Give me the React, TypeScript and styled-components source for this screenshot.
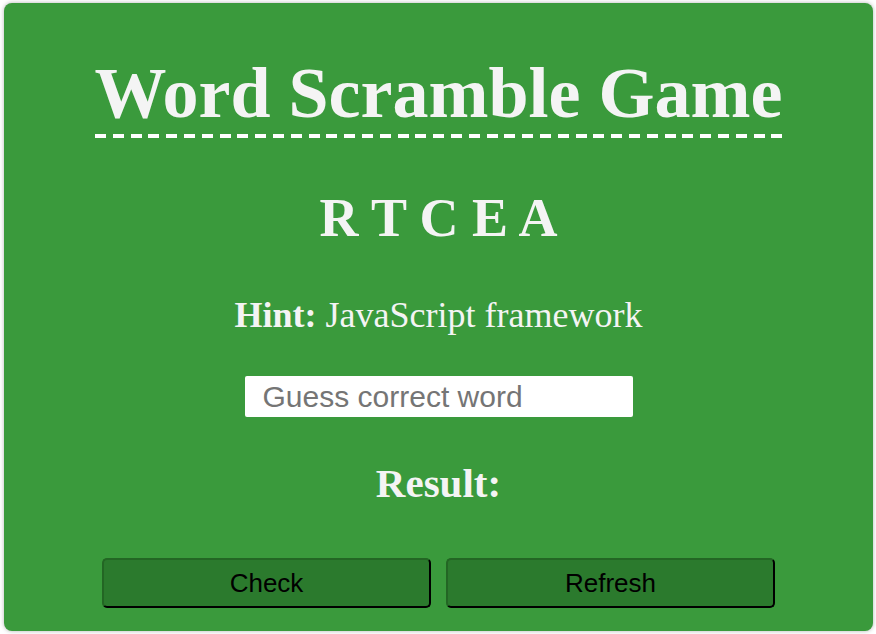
import React, { useState } from "react";
import styled, { createGlobalStyle } from "styled-components";

const GlobalStyle = createGlobalStyle`
  html, body { margin: 0; padding: 0; background: #ffffff; }
  body { font-family: "Liberation Serif", "Times New Roman", serif; }
  * { box-sizing: border-box; }
`;

const Page = styled.div`
  padding: 3px 3px 3px 4px;
  height: 634px;
`;

const Card = styled.div`
  width: 869px;
  height: 628px;
  background: #3a9a3c;
  border-radius: 8px;
  box-shadow: 0 0 4px rgba(0, 0, 0, 0.3);
  padding-top: 54px;
  display: flex;
  flex-direction: column;
  align-items: center;
  color: #f4f4f4;
`;

const Title = styled.h1`
  position: relative;
  margin: 0;
  font-family: "Liberation Serif", "Times New Roman", serif;
  font-weight: bold;
  font-size: 72px;
  line-height: 1;
  padding-bottom: 9px;

  &::after {
    content: "";
    position: absolute;
    left: 0;
    right: 0;
    bottom: 0;
    height: 4px;
    background: repeating-linear-gradient(
      90deg,
      #ffffff 0 11px,
      transparent 11px 17.8px
    );
  }
`;

const Scrambled = styled.div`
  margin-top: 53px;
  font-weight: bold;
  font-size: 54px;
  line-height: 1;
  white-space: pre;
`;

const Hint = styled.p`
  margin: 52px 0 0;
  font-size: 36px;
  line-height: 1;
`;

const Strong = styled.b`
  font-weight: bold;
`;

const Input = styled.input`
  margin-top: 43px;
  width: 388px;
  height: 41px;
  border: none;
  border-radius: 2px;
  background: #ffffff;
  padding: 0 0 0 18px;
  font-family: "Liberation Sans", Arial, sans-serif;
  font-size: 30px;
  color: #222;
  outline: none;
  &::placeholder { color: #757575; }
`;

const Result = styled.div`
  margin-top: 46px;
  font-weight: bold;
  font-size: 41px;
  line-height: 1;
`;

const Buttons = styled.div`
  margin-top: 54px;
  display: flex;
  gap: 15px;
`;

const Button = styled.button`
  width: 329px;
  height: 50px;
  background: #2b7a2d;
  border: 2px solid;
  border-color: #236624 #000 #000 #236624;
  border-radius: 5px;
  font-family: "Liberation Sans", Arial, sans-serif;
  font-size: 26px;
  color: #000;
  padding: 0;
  cursor: pointer;
`;

export default function App() {
  const [guess, setGuess] = useState("");
  return (
    <>
      <GlobalStyle />
      <Page>
        <Card>
          <Title>Word Scramble Game</Title>
          <Scrambled>R T C E A</Scrambled>
          <Hint>
            <Strong>Hint:</Strong> JavaScript framework
          </Hint>
          <Input
            placeholder="Guess correct word"
            value={guess}
            onChange={(e) => setGuess(e.target.value)}
          />
          <Result>Result:</Result>
          <Buttons>
            <Button>Check</Button>
            <Button>Refresh</Button>
          </Buttons>
        </Card>
      </Page>
    </>
  );
}
